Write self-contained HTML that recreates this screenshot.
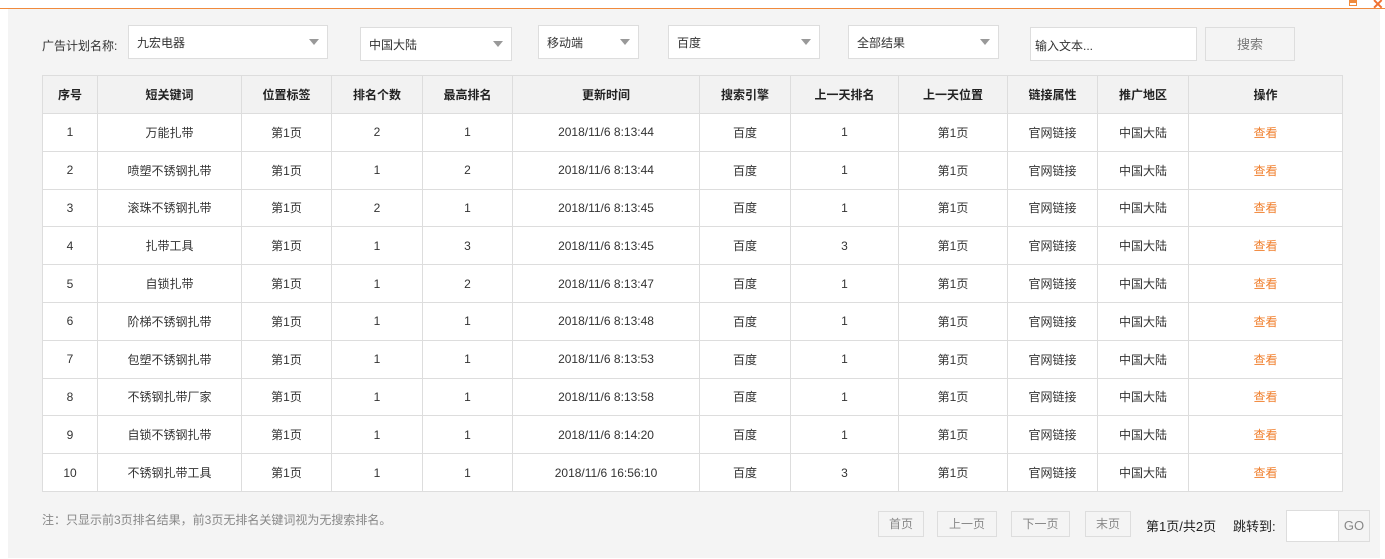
<!DOCTYPE html>
<html><head><meta charset="utf-8"><style>
*{margin:0;padding:0;box-sizing:border-box}
body{width:1385px;height:559px;background:#fff;font-family:"Liberation Sans","Noto Sans CJK SC",sans-serif;font-size:12px;color:#333;position:relative;overflow:hidden}
.top{position:absolute;left:0;top:0;width:1385px;height:9px;border-bottom:1px solid #f08a3c;background:#fff}
.main{position:absolute;left:8px;top:9px;width:1372px;height:549px;background:#f4f4f4}
.a{position:absolute}
.sel{position:absolute;background:#fff;border:1px solid #ddd;height:34px;padding:8px 8px;font-size:12px;color:#333}
.sel:after{content:"";position:absolute;right:8px;top:13px;border-left:5px solid transparent;border-right:5px solid transparent;border-top:6px solid #999}
.inp{position:absolute;background:#fff;border:1px solid #ddd;height:34px;padding:9px 4px;font-size:12px;color:#333}
table{position:absolute;left:42px;top:75px;border-collapse:collapse;background:#fff}
td,th{border:1px solid #ddd;text-align:center;height:37.8px;font-size:12px;padding:0}
th{background:#f2f2f2;font-weight:bold;color:#222;height:38px}
td{color:#333}
.o{color:#f0802f}
.pb{position:absolute;top:511px;height:26px;border:1px solid #ddd;background:#f4f4f4;color:#888;text-align:center;line-height:24px;font-size:12px}
</style></head><body>
<div class="top"></div>
<div class="a" style="left:1349px;top:0;width:8px;height:6px;border:1px solid #f08a3c;border-top:3px solid #f08a3c"></div>
<div class="a" style="left:1372px;top:-4px;color:#f07030;font-size:14px;font-weight:bold">✕</div>
<div class="main"></div>
<div class="a" style="left:42px;top:37px;font-size:12px">广告计划名称:</div>
<div class="sel" style="left:128px;top:25px;width:200px">九宏电器</div>
<div class="sel" style="left:360px;top:27px;width:152px">中国大陆</div>
<div class="sel" style="left:538px;top:25px;width:101px">移动端</div>
<div class="sel" style="left:668px;top:25px;width:152px">百度</div>
<div class="sel" style="left:848px;top:25px;width:151px">全部结果</div>
<div class="inp" style="left:1030px;top:27px;width:167px">输入文本...</div>
<div class="a" style="left:1205px;top:27px;width:90px;height:34px;border:1px solid #ddd;background:#f4f4f4;color:#777;text-align:center;line-height:34px;font-size:13px">搜索</div>
<table>
<colgroup><col style="width:55px"><col style="width:144px"><col style="width:90px"><col style="width:91px"><col style="width:90px"><col style="width:187px"><col style="width:91px"><col style="width:108px"><col style="width:109px"><col style="width:90px"><col style="width:91px"><col style="width:154px"></colgroup>
<tr><th>序号</th><th>短关键词</th><th>位置标签</th><th>排名个数</th><th>最高排名</th><th>更新时间</th><th>搜索引擎</th><th>上一天排名</th><th>上一天位置</th><th>链接属性</th><th>推广地区</th><th>操作</th></tr>
<tr><td>1</td><td>万能扎带</td><td>第1页</td><td>2</td><td>1</td><td>2018/11/6 8:13:44</td><td>百度</td><td>1</td><td>第1页</td><td>官网链接</td><td>中国大陆</td><td class="o">查看</td></tr>
<tr><td>2</td><td>喷塑不锈钢扎带</td><td>第1页</td><td>1</td><td>2</td><td>2018/11/6 8:13:44</td><td>百度</td><td>1</td><td>第1页</td><td>官网链接</td><td>中国大陆</td><td class="o">查看</td></tr>
<tr><td>3</td><td>滚珠不锈钢扎带</td><td>第1页</td><td>2</td><td>1</td><td>2018/11/6 8:13:45</td><td>百度</td><td>1</td><td>第1页</td><td>官网链接</td><td>中国大陆</td><td class="o">查看</td></tr>
<tr><td>4</td><td>扎带工具</td><td>第1页</td><td>1</td><td>3</td><td>2018/11/6 8:13:45</td><td>百度</td><td>3</td><td>第1页</td><td>官网链接</td><td>中国大陆</td><td class="o">查看</td></tr>
<tr><td>5</td><td>自锁扎带</td><td>第1页</td><td>1</td><td>2</td><td>2018/11/6 8:13:47</td><td>百度</td><td>1</td><td>第1页</td><td>官网链接</td><td>中国大陆</td><td class="o">查看</td></tr>
<tr><td>6</td><td>阶梯不锈钢扎带</td><td>第1页</td><td>1</td><td>1</td><td>2018/11/6 8:13:48</td><td>百度</td><td>1</td><td>第1页</td><td>官网链接</td><td>中国大陆</td><td class="o">查看</td></tr>
<tr><td>7</td><td>包塑不锈钢扎带</td><td>第1页</td><td>1</td><td>1</td><td>2018/11/6 8:13:53</td><td>百度</td><td>1</td><td>第1页</td><td>官网链接</td><td>中国大陆</td><td class="o">查看</td></tr>
<tr><td>8</td><td>不锈钢扎带厂家</td><td>第1页</td><td>1</td><td>1</td><td>2018/11/6 8:13:58</td><td>百度</td><td>1</td><td>第1页</td><td>官网链接</td><td>中国大陆</td><td class="o">查看</td></tr>
<tr><td>9</td><td>自锁不锈钢扎带</td><td>第1页</td><td>1</td><td>1</td><td>2018/11/6 8:14:20</td><td>百度</td><td>1</td><td>第1页</td><td>官网链接</td><td>中国大陆</td><td class="o">查看</td></tr>
<tr><td>10</td><td>不锈钢扎带工具</td><td>第1页</td><td>1</td><td>1</td><td>2018/11/6 16:56:10</td><td>百度</td><td>3</td><td>第1页</td><td>官网链接</td><td>中国大陆</td><td class="o">查看</td></tr>
</table>
<div class="a" style="left:42px;top:511px;color:#888;font-size:12px">注：只显示前3页排名结果，前3页无排名关键词视为无搜索排名。</div>
<div class="pb" style="left:878px;width:46px">首页</div>
<div class="pb" style="left:937px;width:60px">上一页</div>
<div class="pb" style="left:1011px;width:59px">下一页</div>
<div class="pb" style="left:1085px;width:46px">末页</div>
<div class="a" style="left:1146px;top:516px;font-size:13px;color:#222">第1页/共2页</div>
<div class="a" style="left:1233px;top:516px;font-size:13px;color:#222">跳转到:</div>
<div class="a" style="left:1286px;top:510px;width:53px;height:32px;border:1px solid #ddd;background:#fff"></div>
<div class="a" style="left:1338px;top:510px;width:32px;height:32px;border:1px solid #ddd;background:#f4f4f4;color:#888;text-align:center;line-height:30px;font-size:13px">GO</div>
</body></html>
